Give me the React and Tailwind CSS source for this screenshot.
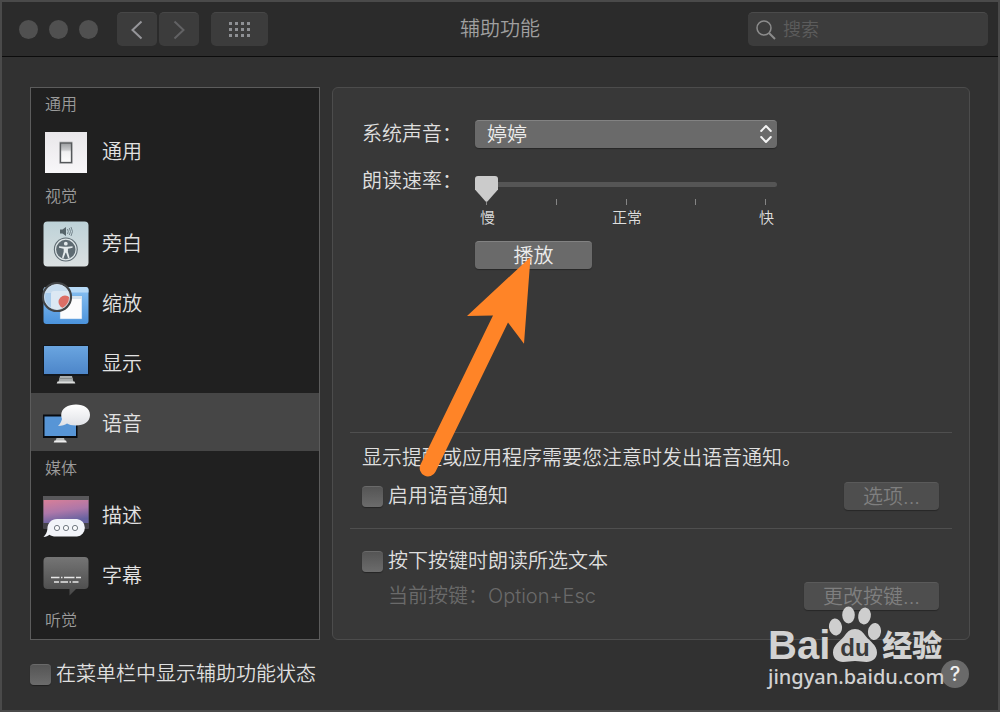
import React from "react";

const buttonBase =
  "h-7 rounded-[4px] border-t text-center leading-[26px] shadow-[0_1px_1px_rgba(0,0,0,0.3)]";

function SwitchIcon() {
  return (
    <svg viewBox="0 0 46 46" className="size-[46px] shrink-0" aria-hidden="true">
      <defs>
        <linearGradient id="plate" x1="0" y1="0" x2="0" y2="1">
          <stop offset="0" stopColor="#e9e7ea" />
          <stop offset="1" stopColor="#f8f7f9" />
        </linearGradient>
        <linearGradient id="rocker" x1="0" y1="0" x2="0" y2="1">
          <stop offset="0" stopColor="#9a9c9f" />
          <stop offset="0.35" stopColor="#c9cacc" />
          <stop offset="0.45" stopColor="#f0f0f1" />
          <stop offset="1" stopColor="#fdfdfd" />
        </linearGradient>
      </defs>
      <rect x="2" y="3" width="42" height="41" fill="url(#plate)" />
      <rect x="16" y="12.500" width="14" height="22.500" rx="1" fill="#c4c4c6" />
      <rect x="17.500" y="14" width="11" height="19.500" fill="url(#rocker)" stroke="#55585b" strokeWidth="1.300" />
    </svg>
  );
}

function VoiceOverIcon() {
  return (
    <svg viewBox="0 0 46 46" className="size-[46px] shrink-0" aria-hidden="true">
      <defs>
        <linearGradient id="vo" x1="0" y1="0" x2="0" y2="1">
          <stop offset="0" stopColor="#bdd2d8" />
          <stop offset="1" stopColor="#dbe0e1" />
        </linearGradient>
      </defs>
      <rect x="0.500" y="0.500" width="45" height="45" rx="4" fill="url(#vo)" />
      <path d="M17 8.500h2.500l3.500-2.500v9l-3.500-2.500H17z" fill="#56646a" />
      <path d="M24.500 8q1.500 2.500 0 5M26.300 7q2.400 3.500 0 7M28 6q3 4.500 0 9" fill="none" stroke="#6c7c83" strokeWidth="0.900" />
      <circle cx="22.800" cy="28.500" r="12" fill="#5e6b72" />
      <circle cx="22.800" cy="28.500" r="10.300" fill="none" stroke="#dde5e7" strokeWidth="1.200" />
      <circle cx="22.800" cy="22.700" r="1.900" fill="#e4eaec" />
      <path d="M16 25.300l5.200.4h3.200l5.200-.4v1.500l-4.700.9v3l1.700 6-1.500.5-2-5.500h-.6l-2 5.500-1.500-.5 1.700-6v-3l-4.700-.9z" fill="#e4eaec" />
    </svg>
  );
}

function ZoomIcon() {
  return (
    <svg viewBox="0 0 46 46" className="size-[46px] shrink-0 overflow-visible" aria-hidden="true">
      <defs>
        <linearGradient id="zw" x1="0" y1="0" x2="0" y2="1">
          <stop offset="0" stopColor="#8cc3f3" />
          <stop offset="1" stopColor="#4b93dc" />
        </linearGradient>
        <clipPath id="lens">
          <circle cx="14" cy="16" r="12.500" />
        </clipPath>
      </defs>
      <rect x="0.500" y="6" width="45" height="37" rx="3" fill="url(#zw)" />
      <path d="M3.500 6h39a3 3 0 0 1 3 3v2.500h-45V9a3 3 0 0 1 3-3z" fill="#b7daf7" />
      <rect x="17" y="15" width="22" height="23" fill="#fcfcfd" stroke="#78aee0" strokeWidth="0.500" />
      <rect x="17" y="15" width="22" height="3" fill="#d8e4ee" />
      <circle cx="14" cy="16" r="13" fill="#a8cbeb" />
      <g clipPath="url(#lens)">
        <rect x="1" y="3" width="26" height="9" fill="#c7dcee" />
        <rect x="8" y="10" width="22" height="22" rx="3" fill="#dce8f3" />
        <circle cx="22" cy="21" r="6.500" fill="#dc6e66" />
      </g>
      <circle cx="14" cy="16" r="14" fill="none" stroke="#424446" strokeWidth="2.200" />
      <circle cx="14" cy="16" r="12.600" fill="none" stroke="#e2e6e9" strokeWidth="0.600" />
    </svg>
  );
}

function DisplayIcon() {
  return (
    <svg viewBox="0 0 46 46" className="size-[46px] shrink-0" aria-hidden="true">
      <defs>
        <linearGradient id="screen" x1="0" y1="0" x2="0" y2="1">
          <stop offset="0" stopColor="#6aa5e0" />
          <stop offset="1" stopColor="#4d86c9" />
        </linearGradient>
      </defs>
      <rect x="0" y="4" width="46" height="31" rx="1" fill="#12171d" />
      <rect x="1" y="5" width="44" height="28" fill="url(#screen)" />
      <path d="M17 35h12l1.500 6h-15z" fill="#a9adad" />
      <path d="M16 37.500h14" stroke="#868a8a" strokeWidth="1" />
      <path d="M14.500 40.500h17l.8 2H13.700z" fill="#dcdedd" />
    </svg>
  );
}

function SpeechIcon() {
  return (
    <svg viewBox="0 0 46 46" className="size-[46px] shrink-0 overflow-visible" aria-hidden="true">
      <defs>
        <linearGradient id="bubble" x1="0" y1="0" x2="0" y2="1">
          <stop offset="0" stopColor="#ffffff" />
          <stop offset="1" stopColor="#dfe1e6" />
        </linearGradient>
      </defs>
      <rect x="0" y="13.500" width="34.500" height="23.500" fill="#080b10" />
      <rect x="1.500" y="15.500" width="31.500" height="19.500" fill="#5795d6" />
      <path d="M13.500 37h7.500l1 3h-9.500z" fill="#b7baba" />
      <path d="M11.500 39.500h11.500l.8 2H10.700z" fill="#eeeeee" />
      <path d="M33 3.500c8 0 14 3.800 14 10.500S41 24.500 33 24.500c-4.500 0-7-.7-9-2-2 1.500-5 2.500-9 2.500 2-2 3.500-4.500 4-7-.6-1.300-.8-2.500-.8-4C18.200 7.500 25 3.500 33 3.500z" fill="url(#bubble)" />
    </svg>
  );
}

function DescriptionIcon() {
  return (
    <svg viewBox="0 0 46 46" className="size-[46px] shrink-0" aria-hidden="true">
      <defs>
        <linearGradient id="sunset" x1="0" y1="0" x2="0.300" y2="1">
          <stop offset="0" stopColor="#d87f98" />
          <stop offset="0.550" stopColor="#ad77a9" />
          <stop offset="1" stopColor="#6762a0" />
        </linearGradient>
      </defs>
      <rect x="0" y="3" width="46" height="33" rx="1" fill="#45434a" />
      <rect x="0" y="3" width="46" height="4" fill="#59585b" />
      <rect x="0.500" y="7" width="45" height="23" fill="url(#sunset)" />
      <path d="M14 26h20a8.800 8.800 0 0 1 0 17.500H13c-3 0-5-.7-6.500-1.800-1.500 1.300-3.500 2-6 2.200 2-2 3.700-5 3.900-8C4.500 30 8.500 26 14 26z" fill="#f2f4f9" />
      <g fill="#fafbfd" stroke="#727982" strokeWidth="1">
        <circle cx="14" cy="35" r="2.600" />
        <circle cx="23" cy="35" r="2.600" />
        <circle cx="32" cy="35" r="2.600" />
      </g>
    </svg>
  );
}

function CaptionIcon() {
  return (
    <svg viewBox="0 0 46 46" className="size-[46px] shrink-0" aria-hidden="true">
      <defs>
        <linearGradient id="cap" x1="0" y1="0" x2="0" y2="1">
          <stop offset="0" stopColor="#757575" />
          <stop offset="1" stopColor="#484848" />
        </linearGradient>
      </defs>
      <path d="M4.500 4h37a4 4 0 0 1 4 4v24a4 4 0 0 1-4 4H33l-6.500 6.500V36h-22a4 4 0 0 1-4-4V8a4 4 0 0 1 4-4z" fill="url(#cap)" />
      <path d="M8 24.500h8.500m1.500 0h1.500m1.500 0h10.500m1.500 0h5M11 29h5m1.500 0h7.500m1.500 0h1.500m1.500 0h6" stroke="#e6e6e6" strokeWidth="1.300" fill="none" />
    </svg>
  );
}

const sections = [
  { title: "通用", items: [{ name: "通用", Icon: SwitchIcon }] },
  {
    title: "视觉",
    items: [
      { name: "旁白", Icon: VoiceOverIcon },
      { name: "缩放", Icon: ZoomIcon },
      { name: "显示", Icon: DisplayIcon },
      { name: "语音", Icon: SpeechIcon, selected: true },
    ],
  },
  {
    title: "媒体",
    items: [
      { name: "描述", Icon: DescriptionIcon },
      { name: "字幕", Icon: CaptionIcon },
    ],
  },
  { title: "听觉", items: [] },
];

function Checkbox({ id, children }) {
  return (
    <div className="flex h-7 items-center gap-[5px]">
      <input
        id={id}
        type="checkbox"
        className="size-[21px] shrink-0 appearance-none rounded-[4px] border-t border-[#6a6a6a] bg-linear-to-b from-[#555555] to-[#6c6c6c] shadow-[0_1px_1px_rgba(0,0,0,0.35)] checked:from-[#3f86e0] checked:to-[#2a6fca]"
      />
      <label htmlFor={id} className="text-[#dfdfdf]">
        {children}
      </label>
    </div>
  );
}

function Toolbar() {
  return (
    <header className="grid grid-cols-[1fr_auto_1fr] items-center border-b border-[#0c0c0c] bg-[#2b2b2b]">
      <div className="flex h-[54px] items-center pl-[17px]">
        <div className="flex gap-[11px]">
          <button aria-label="关闭" className="size-[19px] rounded-full bg-[#505050]" />
          <button aria-label="最小化" className="size-[19px] rounded-full bg-[#505050]" />
          <button aria-label="缩放窗口" className="size-[19px] rounded-full bg-[#505050]" />
        </div>
        <button aria-label="后退" className="ml-[19px] flex h-[34px] w-10 items-center justify-center rounded-[5px] border-t border-[#474747] bg-[#3c3c3c]">
          <svg viewBox="0 0 12 20" className="h-5 w-3" fill="none" stroke="#96969a" strokeWidth="2">
            <path d="M10.500 1.500L1.500 10l9 8.500" />
          </svg>
        </button>
        <button aria-label="前进" className="ml-0.5 flex h-[34px] w-10 items-center justify-center rounded-[5px] border-t border-[#474747] bg-[#3c3c3c]">
          <svg viewBox="0 0 12 20" className="h-5 w-3" fill="none" stroke="#626264" strokeWidth="2">
            <path d="M1.500 1.500L10.500 10l-9 8.500" />
          </svg>
        </button>
        <button aria-label="显示全部" className="ml-3 flex h-[34px] w-[57px] items-center justify-center rounded-[5px] border-t border-[#474747] bg-[#3c3c3c]">
          <svg viewBox="0 0 21 15" className="h-[15px] w-[21px]" fill="#8e9094">
            {[0, 6, 12].map((y) =>
              [0, 6, 12, 18].map((x) => <rect key={`${x}-${y}`} x={x} y={y} width="3" height="3" />)
            )}
          </svg>
        </button>
      </div>
      <h1 className="text-[#a0a0a0]">辅助功能</h1>
      <div className="flex justify-end pr-2.5">
        <label className="flex h-[34px] w-60 items-center rounded-[5px] border-t border-[#4b4b4b] bg-[#3c3c3c] pl-2">
          <svg viewBox="0 0 20 20" className="size-5 shrink-0" fill="none" stroke="#8c8c8c" strokeWidth="1.500">
            <circle cx="8" cy="8" r="7" />
            <path d="M13 13l6 6" strokeWidth="2" />
          </svg>
          <input
            type="search"
            aria-label="搜索"
            placeholder="搜索"
            className="ml-[7px] w-full min-w-0 bg-transparent text-[18px] text-[#dfdfdf] outline-none placeholder:text-[#5c5c5c]"
          />
        </label>
      </div>
    </header>
  );
}

function Sidebar() {
  return (
    <nav className="flex w-[290px] shrink-0 flex-col gap-0.5 border border-[#5c5c5c] bg-[#202020] pt-px">
      {sections.map((s) => (
        <section key={s.title}>
          <h2 className="h-8 pl-3.5 text-base leading-[30px] text-[#9b9b9b]">{s.title}</h2>
          <div className="flex flex-col gap-0.5">
            {s.items.map(({ name, Icon, selected }) => (
              <button
                key={name}
                className={
                  selected
                    ? "flex h-[58px] items-center gap-[13px] bg-[#464646] pt-1 pl-3 text-[#e2e2e2]"
                    : "flex h-[58px] items-center gap-[13px] pt-1 pl-3 text-[#e2e2e2]"
                }
              >
                <Icon />
                <span>{name}</span>
              </button>
            ))}
          </div>
        </section>
      ))}
    </nav>
  );
}

function SpeechPanel() {
  return (
    <section className="relative min-w-0 flex-1 rounded-md border border-[#4c4c4c] bg-[#383838] px-[17px]">
      <div className="grid min-h-[344px] grid-cols-[113px_minmax(0,302px)] content-start gap-y-[19px] pt-8 pl-3">
        <label htmlFor="voice" className="text-[#dfdfdf]">系统声音：</label>
        <div className="relative h-7">
          <select
            id="voice"
            className="block h-7 w-full appearance-none rounded-[4px] border-t border-[#828282] bg-[#6a6a6a] pl-3 text-[#ececec] shadow-[0_1px_1px_rgba(0,0,0,0.3)]"
          >
            <option>婷婷</option>
          </select>
          <svg viewBox="0 0 12 20" className="pointer-events-none absolute top-1 right-[5px] h-5 w-3" fill="none" stroke="#f4f4f4" strokeWidth="2" strokeLinecap="round" strokeLinejoin="round">
            <path d="M1.200 7L6 2l4.800 5M1.200 13L6 18l4.800-5" />
          </svg>
        </div>

        <label htmlFor="rate" className="text-[#dfdfdf]">朗读速率：</label>
        <div className="pt-[15px]">
          <input
            id="rate"
            type="range"
            min="0"
            max="4"
            defaultValue="0"
            className="block h-[5px] w-full appearance-none rounded-full bg-[#555555] [&::-webkit-slider-thumb]:h-[26px] [&::-webkit-slider-thumb]:w-[23px] [&::-webkit-slider-thumb]:translate-y-1 [&::-webkit-slider-thumb]:appearance-none [&::-webkit-slider-thumb]:rounded-[3px] [&::-webkit-slider-thumb]:bg-[#cbcbcb] [&::-webkit-slider-thumb]:[clip-path:polygon(0_0,100%_0,100%_54%,54%_100%,46%_100%,0_54%)]"
          />
          <div className="mt-3 flex justify-between px-[11px]">
            {[0, 1, 2, 3, 4].map((t) => (
              <span key={t} className="h-1.5 w-px bg-[#858585]" />
            ))}
          </div>
          <div className="mt-[3px] flex justify-between pr-[3px] pl-[5px] text-[15px] leading-5 text-[#dfdfdf]">
            <span>慢</span>
            <span>正常</span>
            <span>快</span>
          </div>
          <button className={`${buttonBase} mt-[13px] block w-[117px] border-[#828282] bg-[#6a6a6a] text-[#ececec]`}>
            播放
          </button>
        </div>
      </div>

      <div className="border-t border-[#4f4f4f] pt-[11px] pr-[13px] pb-[18px] pl-3">
        <p className="text-[#dfdfdf]">显示提醒或应用程序需要您注意时发出语音通知。</p>
        <div className="mt-2.5 flex items-center justify-between">
          <Checkbox id="announce">启用语音通知</Checkbox>
          <button disabled className={`${buttonBase} w-[95px] border-[#5a5a5a] bg-[#4e4e4e] text-[#7f7f7f]`}>
            选项...
          </button>
        </div>
      </div>

      <div className="border-t border-[#4f4f4f] pt-[18px] pr-[13px] pb-[29px] pl-3">
        <Checkbox id="speak-key">按下按键时朗读所选文本</Checkbox>
        <div className="mt-[7px] flex items-center justify-between">
          <p className="pl-[26px] text-[#6a6a6a]">
            当前按键：Option+Esc
          </p>
          <button disabled className={`${buttonBase} w-[135px] border-[#5a5a5a] bg-[#4e4e4e] text-[#7f7f7f]`}>
            更改按键...
          </button>
        </div>
      </div>

      <svg viewBox="419 256 113 221" className="pointer-events-none absolute top-[168px] left-[86px] h-[221px] w-[113px]" aria-hidden="true">
        <path d="M530.500 257L467 316l26-.5L420.500 464.500a8.300 8.300 0 0 0 15 7.200L508 322.500l16 21.200z" fill="#ff8427" />
      </svg>
    </section>
  );
}

function Watermark() {
  return (
    <div className="pointer-events-none absolute right-[52px] bottom-[19px] w-[178px] text-[#d2d2d2]">
      <div className="flex h-[58px] items-end">
        <span className="font-['Liberation_Sans',sans-serif] text-[40px] leading-[36px] font-bold">Bai</span>
        <svg viewBox="0 0 54 57" className="-ml-0.5 h-[57px] w-[54px] shrink-0" fill="#cecece">
          <ellipse cx="7.500" cy="21" rx="6.500" ry="8.500" transform="rotate(-8 7.500 21)" />
          <ellipse cx="20.500" cy="9" rx="6.300" ry="8.500" />
          <ellipse cx="36.500" cy="10" rx="6.300" ry="8.500" transform="rotate(10 36.500 10)" />
          <ellipse cx="46.500" cy="25.500" rx="6.500" ry="8.500" transform="rotate(8 46.500 25.500)" />
          <path d="M27 23c5 0 8 3 11 7.500 3.500 4.500 11 8.500 11 16 0 6-5 9.500-10.500 9.500-4 0-7-1-11.500-1s-7.500 1-12 1C9.500 56 5 52.500 5 46.500c0-7.500 7-11 11-16C19 26 22 23 27 23z" />
          <text x="27" y="50" textAnchor="middle" fontFamily="Liberation Sans, sans-serif" fontWeight="700" fontSize="24" fill="#3a3a3a">du</text>
        </svg>
        <span className="text-[30px] leading-[36px] font-black">经验</span>
      </div>
      <div className="font-['Noto_Sans',sans-serif] text-[20px] leading-7 font-medium">jingyan.baidu.com</div>
    </div>
  );
}

export default function App() {
  return (
    <div className="relative min-h-screen border-2 border-[#4a4a4a] bg-[#313131] font-[Inter,'Noto_Sans_CJK_SC',sans-serif] text-[20px] leading-7 font-[350]">
      <Toolbar />
      <main className="flex gap-3 px-7 pt-[30px]">
        <Sidebar />
        <SpeechPanel />
      </main>
      <footer className="mt-5 flex items-center justify-between pr-[29px] pb-[22px] pl-7">
        <Checkbox id="menubar">在菜单栏中显示辅助功能状态</Checkbox>
        <button aria-label="帮助" className="size-7 rounded-full bg-[#6a6a6a] text-center leading-7 font-medium text-[#f0f0f0]">
          ?
        </button>
      </footer>
      <Watermark />
    </div>
  );
}
